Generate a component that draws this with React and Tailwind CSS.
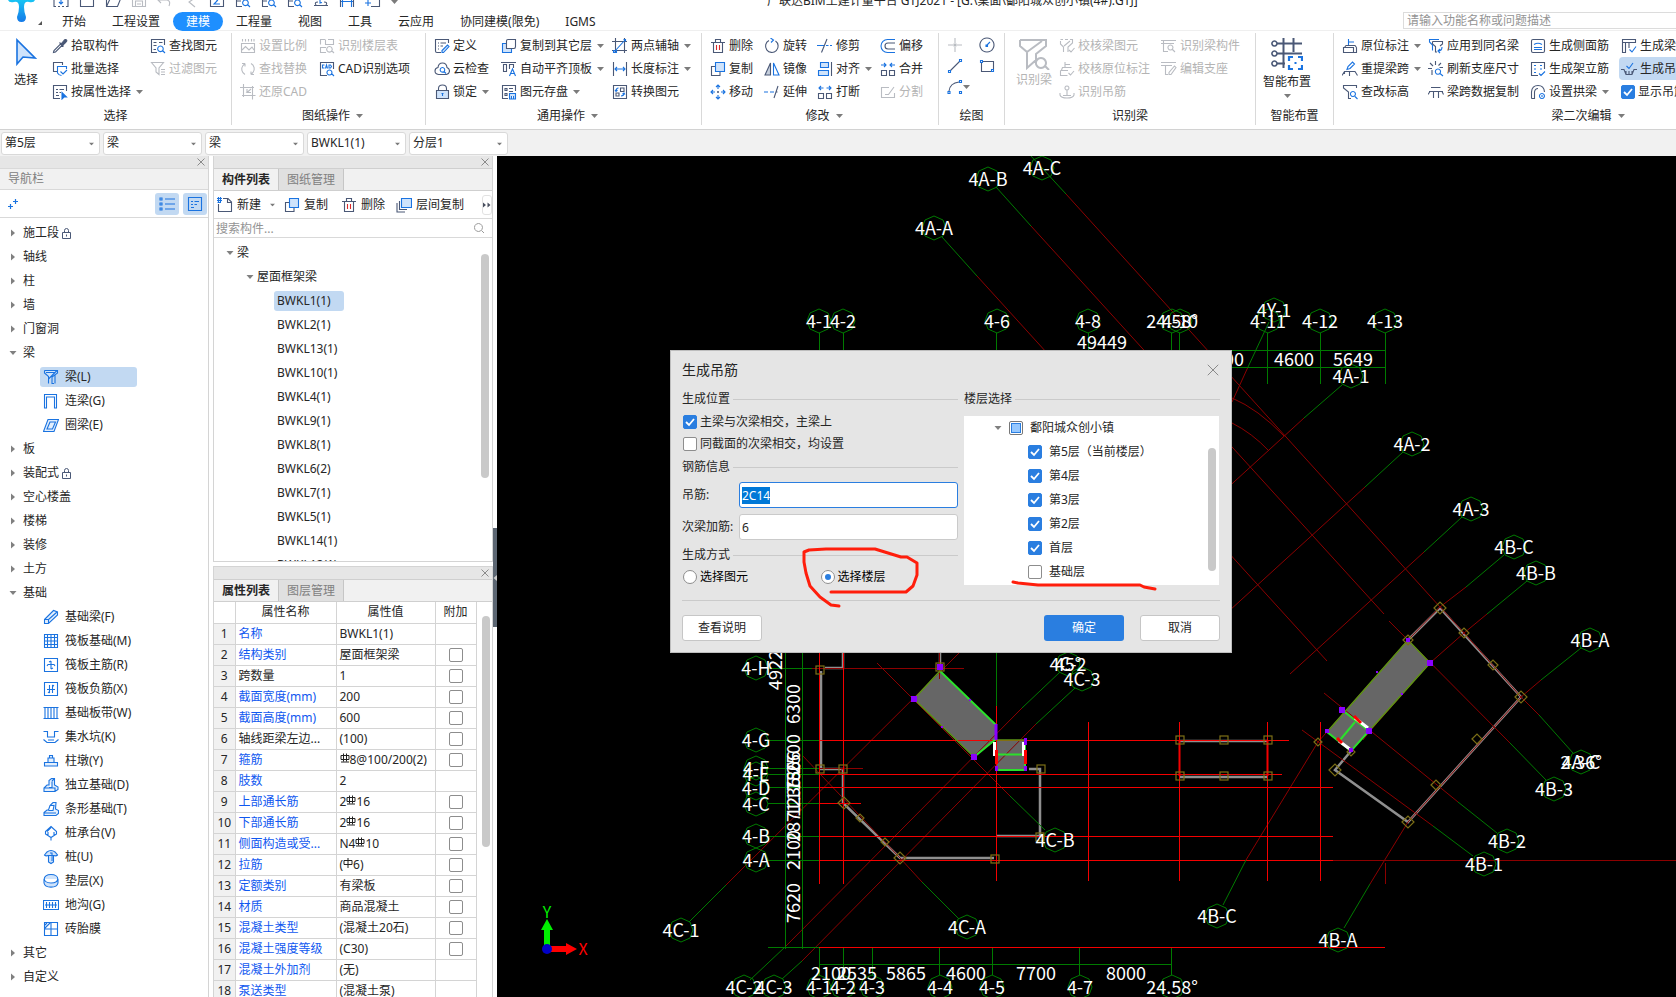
import { useEffect, useRef, useState } from 'react'

const STROKES = { n: '#4a5876', b: '#1a73e0', r: '#d92b2b', g: '#b9bcc2' }

// 16x16 line icons: [stroke key, path, filled?]
const ICONS = {
  picker: [['n', 'M1.5 14.5 2 12.5 8.5 6 10 7.500 3.5 14ZM7.500 4.500 11.500 8.500'], ['n', 'M9 6 12 2.500Q13.500 1 14.500 2T13.500 4.500L10.500 7.500Z', '#4a5876']],
  batch: [['n', 'M5 10.500H1.500V1.500H10.500V4'], ['b', 'M14.500 8V5.500H5.500V12Q7 14.500 9.500 14.500M8.500 10.500 11 13 15 9']],
  byProp: [['n', 'M8 14.500H1.500V1.500H14.500V7M4 5.500H6M7.500 5.500H12M4 8.500H6M7.500 8.500H9M4 11.500H7'], ['b', 'M10 8.500V15L12 13H14.500Z', '#1a73e0']],
  find: [['n', 'M7 14.500H1.500V1.500H14.500V7M3.500 4.500H6.500M3.500 7.500H6.500M3.500 11.500H6M9 4.500H12.500'], ['b', 'M10.500 8A2.800 2.800 0 1 1 10.400 8ZM12.500 12.500 15 15']],
  filter: [['n', 'M1.500 1.500H13.500L9 7V13.500L6 11V7ZM11 8.500H15M11 11H15M11 13.500H15']],
  scale: [['n', 'M1.500 5.500H14.500V14.500H1.500ZM2.500 1V3.500M5.500 1V3.500M8.500 1V3.500M11.500 1V3.500M14 1V3.500M2 12 5.500 8.500 9 12 12 9 14 12']],
  replace: [['n', 'M5 13.500A6 6 0 0 1 3 4.500L5 2.500M5 2.500H2M5 2.500V5.500M11 2.500A6 6 0 0 1 13 11.500L11 13.500M11 13.500H14M11 13.500V10.500']],
  restore: [['n', 'M0 3.500H14M3.500 0V13M2 11.500H15.500M12.500 2V15.500M11 5 7 8.500H11M7 8.500V5']],
  floorTable: [['n', 'M6 1.500H1.500V6.500M1.500 9V14.500H7M6.500 1.500V6.500H14.500V1.500H9M1.500 9.500H7M10.500 8.500A2.800 2.800 0 1 1 10.400 8.500ZM12.500 12.500 15 15']],
  cad: [['n', 'M8 14.500H1.500V1.500H14.500V8'], ['b', 'M5.500 4H3.500V7H5.500M6.500 7.500 7.500 4 8.500 7.500M10 4V7H11.500L12.500 5.500 11.500 4ZM10.500 9A2.500 2.500 0 1 1 10.400 9ZM12.500 12.500 15 15']],
  define: [['n', 'M7 14.500H3Q1.500 14.500 1.500 13V1.500H14.500V5M4 5H5M6.500 5H12M4 8H5M6.500 8H9M4 11H5'], ['b', 'M8 14.500V12.500L13.500 7 15 8.500 9.500 14.500Z', '#cfe3fb']],
  cloud: [['n', 'M4.500 13.500Q1 13 1 10T4 6.500Q4.500 2 8.500 2T13 6.500Q15.500 7.500 15.500 10T12.500 13.500Z'], ['b', 'M8.500 6.500A2.300 2.300 0 1 1 8.400 6.500ZM10 10.500 12 12.500']],
  lock: [['n', 'M2.500 6.500H14.500V14.500H2.500Z', '#cfe3fb'], ['n', 'M4.500 6V4.500Q4.500 1 8.500 1T12.500 4.500V6'], ['b', 'M8.500 9V12M7.500 9.500H9.500']],
  copyFloor: [['b', 'M5.500 5.500H1.500V14.500H10.500V10.500', '#cfe3fb'], ['n', 'M5.500 3Q5.500 1.500 7 1.500H14.500V8.500Q14.500 10.500 13 10.500H5.500Z', '#fff']],
  alignTop: [['n', 'M0 1.500H15M2.500 3.500H5.500V10.500H2.500ZM8.500 8V3.500H12.500V7'], ['b', 'M8.500 15 11.500 8 14.500 15M9.500 12.500H13.500']],
  store: [['n', 'M7 14.500H1.500V1.500H14.500V7M4 4.500H6V6.500H4ZM4 9.500H6V11.500H4ZM8 4.500H12M8 7.500H12'], ['b', 'M8.500 9.500H14.500V15H8.500ZM10.500 12V15H12.500V12', '#cfe3fb']],
  twoPoint: [['n', 'M0 3.500H15M3.500 0V15M0 12.500H15M12.500 0V15'], ['b', 'M2.500 13.500 13.500 1.500M1.500 12.500H4.500V14.500H1.500ZM11.500 1.500H13.500V3.500']],
  dim: [['n', 'M1.500 1V15M14.500 1V15'], ['b', 'M3 8H13M5 6 3 8 5 10M11 6 13 8 11 10']],
  convert: [['n', 'M1.500 1.500H14.500V14.500H1.500ZM8.500 4H12V7.500H8.500ZM4 9H7V12H4Z'], ['b', 'M6.500 4Q4 4 4 7M3 6 4 7.500 5.500 6M9 12Q12 12 12 9M10.500 10 12 9 13 10.500']],
  trash: [['n', 'M1 4.500H15M3.500 4.500V14.500H12.500V4.500M5.500 4V1.500H10.500V4'], ['r', 'M6.500 7V12M9.500 7V12']],
  copy: [['n', 'M5 5.500H1.500V14.500H10V11'], ['b', 'M5.500 1.500H14.500V10.500H5.500Z', '#cfe3fb']],
  move: [['b', 'M8 1V5M8 11V15M1 8H5M11 8H15M6 3 8 1 10 3M6 13 8 15 10 13M3 6 1 8 3 10M13 6 15 8 13 10'], ['n', 'M8 7V9M7 8H9']],
  rotate: [['n', 'M5 2.500A6.300 6.300 0 1 0 11.500 3'], ['b', 'M6.500 0 9.500 2 7 4.500']],
  mirror: [['n', 'M6.500 2V14H1Z', '#c7d0dd'], ['b', 'M9.500 2V14H15Z']],
  extend: [['b', 'M0 8H4M6 8H10'], ['n', 'M10 14 14 2M12 8H13.500']],
  trim: [['b', 'M0 7.500H7M9 7.500H11.500M13 7.500H15'], ['n', 'M4.500 14.500 10 1']],
  align: [['b', 'M3.500 1.500H11.500V6.500H3.500ZM1.500 9.500H11.500V14.500H1.500Z', '#cfe3fb'], ['n', 'M14.500 1V15']],
  breakIt: [['n', 'M1.500 9.500H6.500V14.500H1.500ZM9.500 9.500H14.500V14.500H9.500Z'], ['b', 'M6.500 4H2M4 2 2 4 4 6M9.500 4H14M12 2 14 4 12 6']],
  offset: [['b', 'M15 1.500H7.500A6 6 0 0 0 7.500 14.500H15'], ['n', 'M15 5H8A3 3 0 0 0 8 11H15']],
  merge: [['n', 'M1.500 9.500H6.500V14.500H1.500ZM9.500 9.500H14.500V14.500H9.500Z'], ['b', 'M1 4H6M4 2 6 4 4 6M15 4H10M12 2 10 4 12 6']],
  split: [['n', 'M9 3.500H1.500V13.500H14.500V9M5 10.500H8.500L14 3']],
  point: [['g', 'M8 1V6M8 10V15M1 8H6M10 8H15M7 7H9V9H7Z', '#b9bcc2']],
  circle: [['n', 'M8 1A7 7 0 1 1 7.900 1Z'], ['b', 'M7.500 8.500 11 5M7 8H8.500V9.500H7Z']],
  line: [['n', 'M3 13 13 3'], ['b', 'M1.500 12.500H3.500V14.500H1.500ZM12.500 1.500H14.500V3.500H12.500Z']],
  rect: [['n', 'M3 3.500H14.500V11M13 13.500H2.500V5'], ['b', 'M1.500 2.500H3.500V4.500H1.500ZM12.500 11.500H14.500V13.500H12.500Z']],
  arc: [['n', 'M2 12Q3 4 12 3'], ['b', 'M1 12.500H3V14.500H1ZM12.500 1.500H14.500V3.500H12.500ZM12.500 12.500H14.500V14.500H12.500Z']],
  checkBeam: [['n', 'M1.500 1.500H4M6 1.500H9M11 1.500H13.500V5L9 9V14M1.500 3V6L4.500 9V14M5 8 11 3M10 12 12 14 15.500 10']],
  checkMark: [['n', 'M6 6.500V1M6 3.500H11M2.500 9 3.500 6.500H12.500M1.500 9.500H9M1.500 9.500V14.500H8.500M9.500 12 11.500 14 15 10']],
  hang: [['n', 'M8 2A2 2 0 1 1 7.900 2ZM8 6V12M1 9V11Q2 14 8 14T15 11V9M4 11.500H12']],
  beamPart: [['n', 'M0 2.500H15M2.500 3V13.500H7M0 5.500H13M9.500 7A2.500 2.500 0 1 1 9.400 7ZM11.500 11.500 14 14']],
  editSeat: [['n', 'M0 1.500H15M0 4.500H11M4.500 5V13.500H7M8 13.500V11.500L13.500 5 15 6.500 10 13.500Z']],
  posMark: [['b', 'M6.500 7V1M6.500 4H12'], ['n', 'M2.500 9.500 4 7.500H13L14.500 9.500M1.500 9.500H11.500V14.500H1.500ZM14.500 9.500V14.500H12']],
  reSpan: [['b', 'M5 8.500 6 5.500 10.500 1 12.500 3 8 7.500Z'], ['n', 'M0 14.500 2.500 10.500H13L15.500 14.500M7.500 10.500V15M2.500 10.500V13']],
  elevation: [['n', 'M9 14.500H6.500V8L1.500 4V1.500H14.500V4'], ['b', 'M11 7.500A2.500 2.500 0 1 1 10.900 7.500ZM13 12.500 15.500 15']],
  applyName: [['b', 'M11 1.500H1.500V4L4.500 7V12.500'], ['n', 'M4.500 3.500H14.500V6L12 8M4.500 3.500V6L7.500 8.500V14H9'], ['b', 'M14 9Q14 13 10 13M12 11 10 13 12 15']],
  refresh: [['n', 'M7.500 0V4M0 7.500H4M2 2 5 5M13 2 10.500 4.500M11.500 6.500H15M4 9V14'], ['b', 'M10 8A2.600 2.600 0 1 1 9.900 8ZM12 12.500 15 15']],
  spanCopy: [['n', 'M3 3.500H12.500M1 7.500H15M0 10.500 2 7.500M15.500 10.500 14 7.500M5.500 7.500V14M10.500 7.500V14']],
  sideBar: [['n', 'M3 1.500H13Q14.500 1.500 14.500 3V13Q14.500 14.500 13 14.500H3Q1.500 14.500 1.500 13V3Q1.500 1.500 3 1.500Z'], ['b', 'M4 6.500Q8 4 12 6.500M4 9.500H12M4 11.500H12']],
  frameBar: [['n', 'M8 14.500H1.500V1.500H14.500V8'], ['b', 'M4 4.500H6M10 4.500H12M4 8H6M10 8H12M4 11.500H6M9 12.500 11 14.500 15 10.500']],
  arch: [['n', 'M1.500 14.500V8Q2 1.500 8 1.500T14.500 8M1.500 14.500H4.500V8Q5 4.500 8 4.500'], ['b', 'M12 9.500A2.500 2.500 0 1 1 11.900 9.500ZM12 11V13']],
  genBeam: [['n', 'M1.500 1.500H14.500V4.500H1.500ZM1.500 4.500V14.500H4.500V4.500M8 4.500V10'], ['b', 'M8.500 11.500 11 14 15 8.500']],
  genHang: [['n', 'M0 8.500H3L5 13.500H11L13 8.500H16M5 10V13M8 10V13M11 10V13'], ['b', 'M5.500 5 8 7.500 12 2']],
  newDoc: [['n', 'M6 1.500H11L14.500 5V14.500H1.500V7M10.500 2V5.500H14'], ['b', 'M0 1.500H5M0 3.500H5M0.500 5.500H4M1.500 0V5M3.500 0V5']],
  layerCopy: [['n', 'M3.500 4V12.500H11M1 6V15H9'], ['b', 'M5.500 1.500H15.500V10.500H5.500Z', '#cfe3fb']],
  beam: [['b', 'M1.500 1.500H14.500V4L9 8V14.500H11M1.500 1.500V4L5.500 7.500V14.500M5.500 10 14 1.500M3 3.500H12M12 6V14.500', '#cfe3fb']],
  linkBeam: [['b', 'M1.500 15V1.500H13.500V15H11.500V4H3.500V15Z']],
  ringBeam: [['b', 'M5 2.500H15.500L11 14.500H0.500ZM7 5H12.500L9.500 12H4Z', '#e3effd']],
  baseBeam: [['b', 'M1.500 10.500 10.500 1.500 14.500 3V6L5.500 14.500H1.500ZM5.500 14V10.500L14 3M2 10.500H5.500', '#e3effd']],
  raft: [['b', 'M1.500 1.500H14.500V14.500H1.500ZM4.500 1.500V14.500M8 1.500V14.500M11.500 1.500V14.500M1.500 4.500H14.500M1.500 8H14.500M1.500 11.500H14.500']],
  raftMain: [['b', 'M1.500 1.500H14.500V14.500H1.500ZM8 4V12M4 9 5 7.500H11L12 9M6 5 8 4M10 11 8 12']],
  raftNeg: [['b', 'M1.500 1.500H14.500V14.500H1.500ZM6.500 4V12M9.500 4V12M4 8.500H12M5 11 6.500 12M11 5 9.500 4']],
  strip: [['b', 'M0.500 2.500H15.500M0.500 13.500H15.500M5 3V13M11 3V13M8 3V13'], ['b', 'M2 3V13M14 3V13']],
  pit: [['b', 'M0.500 2.500H4.500V8H11.500V2.500H15.500M0.500 10.500 4 13.500H12L15.500 10.500M5 11H11']],
  pier: [['b', 'M1.500 9.500H14.500V13H1.500ZM5 9.500V5H11V9.500M6.500 5V2.500H9.500V5', '#e3effd']],
  isoBase: [['b', 'M1 14.500V11L4 8H6V3.500L8.500 1.500H11.500V8L15 10V12.500L12 14.500ZM6 10.500H9V4.500M1 11H12V14M9 4 11.500 1.500', '#e3effd']],
  stripBase: [['b', 'M1 14.500V11.500L4 9H5.500L7 4.500 10 1.500H13L12.500 8 15.500 9.500V12.500L13 14.500ZM5.500 9.500H10L11 4.500H7M1 12H13', '#e3effd']],
  cap: [['b', 'M8 1.500 13.500 6.500V9L8 12.500 2.500 9V6.500ZM4 6.500 8 2.500M8 12V15.500M5 10.500V7M11 10.500V7']],
  pile: [['b', 'M1.500 6 4 3Q8 0 12 3L14.500 6Q13 7.500 11 6.500H5Q3 7.500 1.500 6ZM5.500 7V13L8 14.500 10.500 13V7M7 4H9V12', '#cfe3fb']],
  cushion: [['b', 'M8 1.500C17 1.500 17 10 8 10S-1 1.500 8 1.500ZM1 6V10C2 15.500 14 15.500 15 10V6', '#cfe3fb']],
  trench: [['b', 'M0.500 3.500H15.500V12.500H0.500ZM3.500 5V11M6.500 5V11M9.500 5V11M12.500 5V11M2 8H14']],
  brick: [['b', 'M1.500 1.500H14.500V14.500H1.500ZM8 1.500V14.500M1.500 8H14.500M2 7 7 2M2 4 4 2']],
  list: [['b', 'M1 2H3V4H1ZM1 7H3V9H1ZM1 12H3V14H1ZM6 3H16M6 8H16M6 13H16']],
  card: [['b', 'M1.500 1.500H14.500V14.500H1.500ZM4 5.500H6M7.500 5.500H12M4 8.500H6M7.500 8.500H10M4 11.500H7']],
  qSelect: [['n', 'M1 3V14.500H3M5 14.500H7M9 14.500H11M13 14.500H15V3'], ['b', 'M8 7V12M6 10 8 12 10 10']],
  qNew: [['n', 'M1.500 2V14.500H14.500V2Z']],
  qOpen: [['n', 'M1.500 14.500 5 7H15.500L12.500 14.500H1.500V2H11V7']],
  qSave: [['g', 'M1.500 2H14.500V14.500H1.500ZM4.500 14V9H11.500V14M6 12H10']],
  qUndo: [['g', 'M1 8H10Q14 9 12 14M4 5 1 8 4 11']],
  qRedo: [['g', 'M12 6 6 10 12 15']],
  qSum: [['n', 'M1.500 2H14.500V14.500H1.500Z'], ['b', 'M11 5H5L8.500 8.500 5 12H11']],
  qView: [['n', 'M1.500 2V14.500H7M1.500 9H6M7 2V8'], ['b', 'M10.500 8A2.800 2.800 0 1 1 10.400 8ZM12.500 12.500 15 15']],
  qCloud: [['n', 'M1 13.500H15M3 13Q1 10 5 10M13 13Q15 10 11 10'], ['b', 'M7 5V11L9 10.500']],
  qBridge: [['b', 'M1 9.500H15M3.500 6V15M12.500 6V15'], ['n', 'M1.500 15V6M14.500 15V6']],
  qAdd: [['b', 'M0 11H6M3 8V14'], ['n', 'M6 14.500H14.500V3']],
}

const QUICK = ['qSelect', 'qNew', 'qOpen', 'qSave', 'qUndo', 'qRedo', 'qSum', 'qView', 'qView', 'qView', 'qCloud', 'qBridge', 'qAdd']
const TABS = ['开始', '工程设置', '建模', '工程量', '视图', '工具', '云应用', '协同建模(限免)', 'IGMS']

const SELECT_COLS = [
  { w: 'w-[98px]', items: [['picker', '拾取构件'], ['batch', '批量选择'], ['byProp', '按属性选择', 'menu']] },
  { w: 'w-[80px]', items: [['find', '查找图元'], ['filter', '过滤图元', 'off']] },
]
const DRAWING_COLS = [
  { w: 'w-[79px]', items: [['scale', '设置比例', 'off'], ['replace', '查找替换', 'off'], ['restore', '还原CAD', 'off']] },
  { w: 'w-[106px]', items: [['floorTable', '识别楼层表', 'off'], ['cad', 'CAD识别选项']] },
]
const COMMON_COLS = [
  { w: 'w-[67px]', items: [['define', '定义'], ['cloud', '云检查'], ['lock', '锁定', 'menu']] },
  { w: 'w-[111px]', items: [['copyFloor', '复制到其它层', 'menu'], ['alignTop', '自动平齐顶板', 'menu'], ['store', '图元存盘', 'menu']] },
  { w: 'w-[88px]', items: [['twoPoint', '两点辅轴', 'menu'], ['dim', '长度标注', 'menu'], ['convert', '转换图元']] },
]
const MODIFY_COLS = [
  { w: 'w-[54px]', items: [['trash', '删除'], ['copy', '复制'], ['move', '移动']] },
  { w: 'w-[53px]', items: [['rotate', '旋转'], ['mirror', '镜像'], ['extend', '延伸']] },
  { w: 'w-[63px]', items: [['trim', '修剪'], ['align', '对齐', 'menu'], ['breakIt', '打断']] },
  { w: 'w-[54px]', items: [['offset', '偏移'], ['merge', '合并'], ['split', '分割', 'off']] },
]
const DETECT_COLS = [
  { w: 'w-[102px]', items: [['checkBeam', '校核梁图元', 'off'], ['checkMark', '校核原位标注', 'off'], ['hang', '识别吊筋', 'off']] },
  { w: 'w-[90px]', items: [['beamPart', '识别梁构件', 'off'], ['editSeat', '编辑支座', 'off']] },
]
const EDIT_COLS = [
  { w: 'w-[86px]', items: [['posMark', '原位标注', 'menu'], ['reSpan', '重提梁跨', 'menu'], ['elevation', '查改标高']] },
  { w: 'w-[102px]', items: [['applyName', '应用到同名梁'], ['refresh', '刷新支座尺寸'], ['spanCopy', '梁跨数据复制']] },
  { w: 'w-[91px]', items: [['sideBar', '生成侧面筋'], ['frameBar', '生成架立筋'], ['arch', '设置拱梁', 'menu']] },
]

const NAV = [
  { t: '施工段', lock: true }, { t: '轴线' }, { t: '柱' }, { t: '墙' }, { t: '门窗洞' },
  { t: '梁', kids: [['beam', '梁(L)'], ['linkBeam', '连梁(G)'], ['ringBeam', '圈梁(E)']] },
  { t: '板' }, { t: '装配式', lock: true }, { t: '空心楼盖' }, { t: '楼梯' }, { t: '装修' }, { t: '土方' },
  {
    t: '基础',
    kids: [
      ['baseBeam', '基础梁(F)'], ['raft', '筏板基础(M)'], ['raftMain', '筏板主筋(R)'], ['raftNeg', '筏板负筋(X)'],
      ['strip', '基础板带(W)'], ['pit', '集水坑(K)'], ['pier', '柱墩(Y)'], ['isoBase', '独立基础(D)'],
      ['stripBase', '条形基础(T)'], ['cap', '桩承台(V)'], ['pile', '桩(U)'], ['cushion', '垫层(X)'],
      ['trench', '地沟(G)'], ['brick', '砖胎膜'],
    ],
  },
  { t: '其它' }, { t: '自定义' },
]

const BEAMS = ['BWKL1(1)', 'BWKL2(1)', 'BWKL13(1)', 'BWKL10(1)', 'BWKL4(1)', 'BWKL9(1)', 'BWKL8(1)', 'BWKL6(2)', 'BWKL7(1)', 'BWKL5(1)', 'BWKL14(1)', 'BWKL12(1)']

// # = three-grade rebar mark, % = plain bar mark
const PROPS = [
  ['名称', 'BWKL1(1)', 0, 1], ['结构类别', '屋面框架梁', 1, 1], ['跨数量', '1', 1, 0], ['截面宽度(mm)', '200', 1, 1],
  ['截面高度(mm)', '600', 1, 1], ['轴线距梁左边...', '(100)', 1, 0], ['箍筋', '#8@100/200(2)', 1, 1], ['肢数', '2', 0, 1],
  ['上部通长筋', '2#16', 1, 1], ['下部通长筋', '2#16', 1, 1], ['侧面构造或受...', 'N4#10', 1, 1], ['拉筋', '(%6)', 1, 1],
  ['定额类别', '有梁板', 1, 1], ['材质', '商品混凝土', 1, 1], ['混凝土类型', '(混凝土20石)', 1, 1], ['混凝土强度等级', '(C30)', 1, 1],
  ['混凝土外加剂', '(无)', 0, 1], ['泵送类型', '(混凝土泵)', 0, 1],
]

function Icon({ name, off = false, className = 'h-4 w-4' }) {
  return (
    <svg viewBox="0 0 16 16" className={`shrink-0 ${className}`} aria-hidden="true">
      {ICONS[name].map(([c, d, fill], i) => (
        <path key={i} d={d} stroke={off ? STROKES.g : STROKES[c]} fill={off ? 'none' : fill || 'none'} strokeWidth="1.1" />
      ))}
    </svg>
  )
}

function Caret({ className = '' }) {
  return (
    <svg viewBox="0 0 7 4" className={`h-1 w-[7px] shrink-0 ${className}`} aria-hidden="true">
      <path d="M0 0H7L3.500 4Z" fill="#7b7b7b" />
    </svg>
  )
}

function TreeArrow({ open }) {
  return (
    <svg viewBox="0 0 8 8" className="h-2 w-2 shrink-0" aria-hidden="true">
      <path d={open ? 'M0.500 2H7.500L4 6Z' : 'M2 0.500V7.500L6 4Z'} fill="#808080" />
    </svg>
  )
}

function Cross({ className = 'h-2 w-2' }) {
  return (
    <svg viewBox="0 0 8 8" className={className} aria-hidden="true">
      <path d="M0.500 0.500 7.500 7.500M7.500 0.500 0.500 7.500" stroke="#8a8a8a" strokeWidth="1" vectorEffect="non-scaling-stroke" />
    </svg>
  )
}

function Check({ id, label, defaultChecked }) {
  return (
    <span className="grid shrink-0">
      <input
        id={id}
        type="checkbox"
        aria-label={label}
        defaultChecked={defaultChecked}
        className="peer col-start-1 row-start-1 h-3.5 w-3.5 appearance-none rounded-[2px] border border-[#8d8d8d] bg-white checked:border-[#2a7ee0] checked:bg-[#2a7ee0]"
      />
      <svg viewBox="0 0 14 14" className="pointer-events-none col-start-1 row-start-1 hidden h-3.5 w-3.5 peer-checked:block" aria-hidden="true">
        <path d="M3 7 6 10 11 4" stroke="#fff" strokeWidth="1.800" fill="none" />
      </svg>
    </span>
  )
}

function Tool({ item }) {
  const [icon, label, flag] = item
  const off = flag === 'off'
  return (
    <button disabled={off} className={`flex h-[23px] items-center gap-[3px] whitespace-nowrap ${off ? 'text-[#b4b4b4]' : ''}`}>
      <Icon name={icon} off={off} />
      {label}
      {flag === 'menu' && <Caret className="ml-0.5" />}
    </button>
  )
}

function Columns({ cols }) {
  return cols.map((col, i) => (
    <div key={i} className={`shrink-0 ${col.w}`}>
      {col.items.map((item) => <Tool key={item[1]} item={item} />)}
    </div>
  ))
}

function Group({ label, menu, width, children }) {
  return (
    <>
      <section className={`flex shrink-0 flex-col ${width}`}>
        <div className="flex h-[72px] pt-[3px]">{children}</div>
        <div className="flex h-[27px] items-center justify-center gap-1.5 whitespace-nowrap">
          {label}
          {menu && <Caret />}
        </div>
      </section>
      <div className="mb-1 mt-0.5 w-px shrink-0 bg-[#d9d9d9]" />
    </>
  )
}

function Logo() {
  return (
    <svg viewBox="0 0 49 31" className="h-[31px] w-[49px] shrink-0" aria-hidden="true">
      <defs>
        <linearGradient id="drop" x1="0" y1="0" x2="0" y2="1">
          <stop offset="0" stopColor="#18c4f4" />
          <stop offset="1" stopColor="#1579e8" />
        </linearGradient>
      </defs>
      <path d="M8 0H35Q34 3 29 2Q24 1 24 7Q24 12 26 17Q26 22 21.500 22T17 17Q19 12 19 7Q19 1 14 2Q9 3 8 0Z" fill="url(#drop)" />
      <path d="M38 25H42V21Z" fill="#555" />
    </svg>
  )
}

function Header() {
  return (
    <header className="flex h-[31px] shrink-0 border-b border-[#efefef] bg-white">
      <Logo />
      <div className="min-w-0 flex-1">
        <div className="flex h-3 items-end overflow-hidden">
          <div className="flex h-6 shrink-0 items-end gap-2.5 pb-1 pl-1">
            {QUICK.map((n, i) => (
              <button key={i} aria-label={n} className="h-4 w-4"><Icon name={n} /></button>
            ))}
            <Caret className="mb-1" />
          </div>
          <h1 className="ml-[369px] h-[22px] whitespace-nowrap leading-[22px]">广联达BIM土建计量平台 GTJ2021 - [G:\桌面\鄱阳城众创小镇(4#).GTJ]</h1>
        </div>
        <div className="flex items-end justify-between">
          <nav className="flex">
            {TABS.map((t) => (
              <a key={t} href="#" className={`h-[19px] whitespace-nowrap rounded-full px-[13px] leading-[19px] ${t === '建模' ? 'bg-[#1e8fff] text-white' : ''}`}>
                {t}
              </a>
            ))}
          </nav>
          <input
            aria-label="搜索功能"
            placeholder="请输入功能名称或问题描述"
            className="mb-0.5 h-[17px] w-[273px] border border-r-0 border-[#dcdcdc] bg-white px-[3px] placeholder:text-[#949494]"
          />
        </div>
      </div>
    </header>
  )
}

function Ribbon() {
  return (
    <div className="flex h-[99px] shrink-0 overflow-hidden border-b border-[#d2d2d2] bg-white">
      <Group label="选择" width="w-[231px]">
        <button className="flex w-[52px] shrink-0 flex-col items-center gap-1.5 pt-1">
          <svg viewBox="0 0 22 28" className="h-7 w-[22px]" aria-hidden="true">
            <path d="M2 2V26L8 19 20 20Z" fill="#cfe3fb" stroke="#1a73e0" strokeWidth="1.600" />
          </svg>
          选择
        </button>
        <Columns cols={SELECT_COLS} />
      </Group>
      <Group label="图纸操作" menu width="w-[193px] pl-2"><Columns cols={DRAWING_COLS} /></Group>
      <Group label="通用操作" menu width="w-[275px] pl-2"><Columns cols={COMMON_COLS} /></Group>
      <Group label="修改" menu width="w-[236px] pl-2"><Columns cols={MODIFY_COLS} /></Group>
      <Group label="绘图" width="w-[65px]">
        <div className="grid grid-cols-2 items-center justify-items-center">
          <button aria-label="点" className="h-4 w-4"><Icon name="point" /></button>
          <button aria-label="圆" className="h-4 w-4"><Icon name="circle" /></button>
          <button aria-label="直线" className="h-4 w-4"><Icon name="line" /></button>
          <button aria-label="矩形" className="h-4 w-4"><Icon name="rect" /></button>
          <button aria-label="弧" className="h-4 w-4"><Icon name="arc" /></button>
          <Caret className="-ml-2 justify-self-start" />
          <span className="h-0 w-8" />
          <span className="h-0 w-8" />
        </div>
      </Group>
      <Group label="识别梁" width="w-[250px]">
        <button disabled className="flex w-[54px] shrink-0 flex-col items-center gap-0.5 pl-1 pt-1 text-[#b4b4b4]">
          <svg viewBox="0 0 32 32" className="h-8 w-8" aria-hidden="true">
            <path d="M2 2H28V8L18 16V24M2 2V8L9 14V30L18 22M9 14 24 3M23 20A5 5 0 1 1 22.900 20ZM27 28 31 32" fill="none" stroke="#b9bcc2" strokeWidth="2" />
          </svg>
          <span className="whitespace-nowrap">识别梁</span>
        </button>
        <Columns cols={DETECT_COLS} />
      </Group>
      <Group label="智能布置" width="w-[77px]">
        <button className="flex w-[62px] flex-col items-center gap-1 pt-1">
          <svg viewBox="0 0 32 32" className="h-8 w-8 shrink-0" aria-hidden="true">
            <path d="M6 5.500H31M6 15.500H31M6 25.500H14M12.500 0V30M22.500 0V14" fill="none" stroke="#4a5876" strokeWidth="2" />
            <path d="M3.500 3A2.500 2.500 0 1 1 3.400 3ZM3.500 13A2.500 2.500 0 1 1 3.400 13ZM3.500 23A2.500 2.500 0 1 1 3.400 23Z" fill="none" stroke="#4a5876" strokeWidth="1.600" />
            <path d="M18 23V19H22M27 19H31V23M31 27V31H27M22 31H18V27M23.500 25H25.500" fill="none" stroke="#1a73e0" strokeWidth="2.200" />
          </svg>
          <span className="whitespace-nowrap leading-4">智能布置</span>
          <Caret />
        </button>
      </Group>
      <Group label="梁二次编辑" menu width="w-[500px] pl-2">
        <Columns cols={EDIT_COLS} />
        <div className="w-24 shrink-0">
          <Tool item={['genBeam', '生成梁']} />
          <div className="-ml-0.5 rounded-l bg-[#c2d9f2] pl-0.5"><Tool item={['genHang', '生成吊']} /></div>
          <div className="flex h-[23px] items-center gap-[3px] whitespace-nowrap">
            <Check id="show-hang" defaultChecked />
            <label htmlFor="show-hang">显示吊筋</label>
          </div>
        </div>
      </Group>
    </div>
  )
}

function Combos() {
  return (
    <div className="flex h-[26px] shrink-0 items-center gap-[3px] bg-[#f1f1f1] pl-px">
      {[['楼层', '第5层'], ['构件类别', '梁'], ['构件类型', '梁'], ['构件', 'BWKL1(1)'], ['分层', '分层1']].map(([name, value]) => (
        <div key={name} className="relative">
          <select aria-label={name} className="h-[23px] w-[99px] appearance-none rounded-[3px] border border-[#d9d9d9] bg-white px-[3px]">
            <option>{value}</option>
          </select>
          <Caret className="pointer-events-none absolute right-[5px] top-[10px] scale-75" />
        </div>
      ))}
    </div>
  )
}

function Strip() {
  return (
    <div className="flex h-3 shrink-0 items-center justify-end bg-[#e6e6e6] pr-[3px]">
      <button aria-label="关闭"><Cross /></button>
    </div>
  )
}

function NavPanel() {
  const [selected, setSelected] = useState('梁(L)')
  return (
    <aside className="flex w-[209px] shrink-0 flex-col border-r border-[#d4d4d4] bg-white">
      <Strip />
      <h2 className="h-[22px] shrink-0 border-b border-t border-[#d9d9d9] bg-[#f1f1f1] pl-2 leading-5 text-[#808080]">导航栏</h2>
      <div className="flex h-7 shrink-0 items-center gap-1 border-b border-[#d9d9d9] pl-2 pr-px">
        <svg viewBox="0 0 10 10" className="mr-auto h-2.5 w-2.5" aria-hidden="true">
          <path d="M0 7.500H5M2.500 5V10M5 2.500H10M7.500 0V5" stroke="#1a73e0" fill="none" strokeWidth="1.200" />
        </svg>
        <button aria-label="列表" className="grid h-[22px] w-6 place-items-center rounded-[3px] bg-[#c2d9f2]"><Icon name="list" /></button>
        <button aria-label="卡片" className="grid h-[22px] w-6 place-items-center rounded-[3px] bg-[#c2d9f2]"><Icon name="card" /></button>
      </div>
      <ul className="min-h-0 flex-1 overflow-hidden pt-[3px]">
        {NAV.map((node) => (
          <li key={node.t}>
            <div className="flex h-6 items-center gap-1.5 pl-[9px]">
              <TreeArrow open={!!node.kids} />
              <span className="flex items-center gap-[3px]">
                {node.t}
                {node.lock && (
                  <svg viewBox="0 0 9 11" className="h-[11px] w-[9px]" aria-hidden="true">
                    <path d="M0.500 4.500H8.500V10.500H0.500ZM2.500 4V2.500Q2.500 0.500 4.500 0.500T6.500 2.500V4M4.500 6.500V8.500" fill="none" stroke="#4a5876" />
                  </svg>
                )}
              </span>
            </div>
            {node.kids?.map(([icon, label]) => (
              <div key={label} className="flex h-6 items-center pl-10">
                <button
                  onClick={() => setSelected(label)}
                  className={`flex h-5 w-[97px] items-center gap-1.5 whitespace-nowrap rounded-[3px] pl-[3px] ${selected === label ? 'bg-[#c2d9f2]' : ''}`}
                >
                  <Icon name={icon} />
                  {label}
                </button>
              </div>
            ))}
          </li>
        ))}
      </ul>
    </aside>
  )
}

function PanelTabs({ items }) {
  return (
    <div role="tablist" className="flex h-[23px] shrink-0 border-b border-t border-[#cfcfcf] bg-[#f1f1f1]">
      <button role="tab" className="w-[65px] border-r border-[#c6c6c6] font-bold">{items[0]}</button>
      <button role="tab" className="w-[65px] border-r border-[#c6c6c6] bg-[#e0e0e0] text-[#808080]">{items[1]}</button>
    </div>
  )
}

function ComponentPanel() {
  return (
    <section className="flex h-[406px] shrink-0 flex-col border border-t-0 border-[#d4d4d4] bg-white">
      <Strip />
      <PanelTabs items={['构件列表', '图纸管理']} />
      <div className="flex h-7 shrink-0 items-center whitespace-nowrap border-b border-[#d9d9d9] pl-[3px]">
        <button className="flex w-[67px] items-center gap-1"><Icon name="newDoc" />新建<Caret className="ml-1 scale-75" /></button>
        <button className="flex w-[57px] items-center gap-1"><Icon name="copy" />复制</button>
        <button className="flex w-[55px] items-center gap-1"><Icon name="trash" />删除</button>
        <button className="flex items-center gap-1"><Icon name="layerCopy" />层间复制</button>
        <button aria-label="更多" className="ml-auto grid h-5 w-2.5 place-items-center rounded-[3px] border border-[#e2e2e2]">
          <svg viewBox="0 0 8 6" className="h-1.5 w-2" aria-hidden="true"><path d="M0 0.500 3 3 0 5.500ZM4.500 0.500 7.500 3 4.500 5.500Z" fill="#4a5060" /></svg>
        </button>
      </div>
      <div className="flex h-[19px] shrink-0 items-center border-b border-[#d9d9d9] pl-0.5 pr-2">
        <input aria-label="搜索构件" placeholder="搜索构件..." className="h-[18px] min-w-0 flex-1 placeholder:text-[#949494]" />
        <svg viewBox="0 0 10 10" className="h-2.5 w-2.5" aria-hidden="true"><path d="M4.500 0.500A4 4 0 1 1 4.400 0.500ZM7.500 7.500 10 10" fill="none" stroke="#999" /></svg>
      </div>
      <div className="flex min-h-0 flex-1 overflow-hidden">
        <ul className="flex-1 pt-[3px]">
          <li className="flex h-6 items-center gap-[3px] pl-3"><TreeArrow open />梁</li>
          <li className="flex h-6 items-center gap-[3px] pl-8"><TreeArrow open />屋面框架梁</li>
          {BEAMS.map((b, i) => (
            <li key={b} className="flex h-6 items-center pl-[60px]">
              <span className={`h-5 w-[70px] whitespace-nowrap rounded-[3px] pl-[3px] leading-5 ${i === 0 ? 'bg-[#c2d9f2]' : ''}`}>{b}</span>
            </li>
          ))}
        </ul>
        <div className="mr-[3px] mt-4 h-[224px] w-2 rounded-full bg-[#c9c9c9]" />
      </div>
    </section>
  )
}

function Rebar({ text }) {
  return text.split(/([#%])/).map((part, i) => {
    if (part !== '#' && part !== '%') return part
    return (
      <svg key={i} viewBox="0 0 10 10" className="mb-1 inline-block h-2.5 w-2.5" aria-hidden="true">
        <path d={part === '#' ? 'M1 2.500H9V6.500H1ZM3.500 0.500V8.500M6.500 0.500V8.500M1 9H9' : 'M1 2.500H9V6.500H1ZM5 0V10'} fill="none" stroke="#222" />
      </svg>
    )
  })
}

function PropertyPanel() {
  return (
    <section className="mt-1 flex min-h-0 flex-1 flex-col overflow-hidden border border-b-0 border-[#d4d4d4] bg-white">
      <Strip />
      <PanelTabs items={['属性列表', '图层管理']} />
      <div className="flex">
        <table className="w-[262px] shrink-0 table-fixed border-collapse">
          <colgroup>
            <col className="w-[21px]" />
            <col className="w-[101px]" />
            <col className="w-[99px]" />
            <col className="w-[41px]" />
          </colgroup>
          <thead>
            <tr className="h-[21px]">
              {['', '属性名称', '属性值', '附加'].map((h) => (
                <th key={h} className="border-b border-r border-[#d4d4d4] p-0 font-normal">{h}</th>
              ))}
            </tr>
          </thead>
          <tbody>
            {PROPS.map(([name, value, extra, blue], i) => (
              <tr key={name} className="h-[21px]">
                <td className="border-b border-r border-[#d4d4d4] bg-[#f1f1f1] p-0 text-center">{i + 1}</td>
                <td className={`whitespace-nowrap border-b border-r border-[#d4d4d4] p-0 pl-[3px] ${blue ? 'text-[#1058f0]' : ''}`}>{name}</td>
                <td className="whitespace-nowrap border-b border-r border-[#d4d4d4] p-0 pl-[3px]"><Rebar text={value} /></td>
                <td className="border-b border-r border-[#d4d4d4] p-0">
                  {extra ? <span className="flex justify-center"><Check label={`附加 ${name}`} /></span> : null}
                </td>
              </tr>
            ))}
          </tbody>
        </table>
        <div className="ml-[5px] mt-3.5 h-[231px] w-2 rounded-full bg-[#c9c9c9]" />
      </div>
    </section>
  )
}

const BUBBLES = [
  [934, 228, '4A-A'], [988, 179, '4A-B'], [1042, 168, '4A-C'], [819, 321, '4-1'], [843, 321, '4-2'], [997, 321, '4-6'],
  [1088, 321, '4-8'], [1172, 321, '24.58°'], [1180, 321, '4-10'], [1274, 310, '4Y-1'], [1268, 321, '4-11'], [1320, 321, '4-12'],
  [1385, 321, '4-13'], [1351, 376, '4A-1'], [1412, 444, '4A-2'], [1471, 509, '4A-3'], [1514, 547, '4B-C'], [1536, 573, '4B-B'],
  [1590, 640, '4B-A'], [1581, 762, '4A-C'], [1554, 789, '4B-3'], [1507, 841, '4B-2'], [1484, 864, '4B-1'], [1217, 916, '4B-C'],
  [1338, 940, '4B-A'], [756, 668, '4-H'], [756, 740, '4-G'], [756, 768, '4-F'], [756, 774, '4-E'], [756, 788, '4-D'],
  [756, 804, '4-C'], [756, 836, '4-B'], [756, 860, '4-A'], [1068, 664, '4C-2'], [1082, 679, '4C-3'], [1055, 840, '4C-B'],
  [967, 927, '4C-A'], [681, 930, '4C-1'], [744, 987, '4C-2'], [774, 987, '4C-3'], [819, 987, '4-1'], [843, 987, '4-2'],
  [872, 987, '4-3'], [940, 987, '4-4'], [992, 987, '4-5'], [1080, 987, '4-7'], [1172, 987, '24.58°'],
]

const DIMS = [
  [1102, 342, '49449'], [1224, 359, '7700'], [1294, 359, '4600'], [1353, 359, '5649'], [1581, 762, '2.36°'], [1068, 664, '45°'],
  [831, 973, '2100'], [857, 973, '2535'], [906, 973, '5865'], [966, 973, '4600'], [1036, 973, '7700'], [1126, 973, '8000'],
]

const VERTICAL_DIMS = [[776, 665, '49224'], [794, 704, '6300'], [794, 754, '2500'], [794, 771, '1506'], [794, 781, '1785'], [794, 797, '1235'], [794, 822, '2871'], [794, 850, '2100'], [794, 903, '7620']]

const SQUARES = [
  [820, 670], [820, 769], [843, 769], [940, 667], [995, 859], [1041, 769], [1040, 837],
  [1180, 740], [1224, 740], [1268, 740], [1180, 776], [1224, 776], [1268, 776],
]
const DIAMONDS = [
  [844, 803, 6], [860, 818, 4], [885, 842, 4], [900, 858, 6], [1440, 608, 6], [1464, 633, 5], [1493, 665, 5], [1521, 697, 6],
  [1477, 739, 5], [1436, 785, 5], [1408, 822, 6], [1335, 770, 6], [1318, 742, 4], [1408, 640, 5], [1351, 752, 4],
]
const GRIPS = [[940, 667, 3], [914, 699, 3], [974, 757, 3], [970, 700, 1], [942, 727, 1], [1408, 640, 2], [1430, 663, 3], [1342, 710, 3], [1369, 731, 3], [1351, 750, 2], [1327, 731, 2], [1377, 672, 1], [1402, 694, 1]]

function Drawing() {
  return (
    <svg viewBox="497 156 1179 841" preserveAspectRatio="xMinYMin slice" className="h-full w-full" aria-label="绘图区">
      {/* slabs */}
      <path d="M940 671 996 725V739L974 757 914 699ZM997 740H1025V770H997ZM1408 640 1430 663 1351 751 1327 732Z" fill="#666" />
      {/* walls */}
      <path
        d="M843 652V668H825M821 671V769H843V803L900 858H994M996 836H1040V769H1029M940 652V668M1180 741H1268M1180 777H1268M1408 640 1440 608 1521 697 1408 822 1335 770 1351 751"
        fill="none" stroke="#8f8f8f" strokeWidth="2.500"
      />
      {/* faint grid axes */}
      <g fill="none" stroke="#8c0000" strokeWidth="1">
        <path d="M977 276 1327 661M1031 226 1384 614M1389 621 1510 743M1066 194 1440 607 1464 633 1521 697 1539 715" />
        <path d="M1466 587 1440 607 1408 640 1318 742 1246 860M1487 614 1464 633 1430 663 1369 732 1363 740M1541 680 1521 697 1408 822 1370 884" />
        <path d="M1433 826 1302 730M1458 802 1324 693M1304 418 1200 513M1365 487 1184 652M1424 552 1290 674M1248 367 1232 402" />
        <path d="M1232 398Q1258 409 1284 436M1232 423Q1252 433 1269 451" />
        <path d="M726 885 959 653M785 947 1022 708M802 961 1036 724M802 755 900 858 922 882M877 663 1010 796" />
        <path d="M812 668.500H964M819 768.500H863M1333 860.500H1676M939.500 652V679M1385.500 863V884" />
      </g>
      {/* main grid axes */}
      <g fill="none" stroke="#f40000" strokeWidth="1">
        <path d="M819 740.500H1289M819 774.500H1282M819 787.500H1333M819 803.500H861M819 836.500H1333M819 860.500H1333M819 947.500H1385" />
        <path d="M819.500 652V884M843.500 652V884M996.500 706V881M1088.500 722V881M1179.500 722V881M1267.500 722V881M1320.500 722V881" />
        <path d="M1179.500 741V776M1267.500 741V776" strokeWidth="2" />
      </g>
      <g fill="none" stroke="#007a00" strokeWidth="1">
        <path d="M942 237 977 276M996 187 1031 226M1031 156 1066 194M1504 555 1466 587M1527 581 1487 614M1581 648 1541 680M1573 753 1539 715" />
        <path d="M1546 780 1510 743M1497 833 1458 802M1473 856 1433 826M1223 905 1246 860M1344 928 1370 884M1342 385 1304 418M1403 452 1365 487M1462 517 1424 552M1269 322 1248 367" />
        <path d="M689 922 726 885M750 980 785 947M782 979 802 961M1022 708 1060 672M1036 724 1075 688M922 882 959 919M1010 796 1045 830" />
        <path d="M819 350.500H1385M1231 367.500H1385M819.500 333V352M843.500 333V352M996.500 333V352M1088.500 333V352M1171.500 333V352M1179.500 333V352M1267.500 333V384M1320.500 333V384M1385.500 333V384" />
        <path d="M785.500 652V949M802.500 652V949M996.500 652V706M768 668.500H812M768 740.500H819M768 768.500H819M768 774.500H819M768 787.500H819M768 803.500H819M768 836.500H819M768 860.500H819M768 947.500H819" />
        <path d="M819 964.500H1172M819.500 948V975M843.500 948V975M872.500 948V975M939.500 948V975M992.500 948V975M1079.500 948V975M1171.500 948V975" />
        {BUBBLES.map(([x, y], i) => (
          <path key={i} d={`M${x - 12} ${y}L${x - 9} ${y - 8}L${x} ${y - 12}L${x + 9} ${y - 8}L${x + 12} ${y}L${x + 9} ${y + 8}L${x} ${y + 12}L${x - 9} ${y + 8}Z`} />
        ))}
      </g>
      {/* beams on the slabs */}
      <g fill="none" strokeWidth="2">
        <path d="M940 671 996 725M974 757 996 739M1025 740V770H997M997 754.500H1025M1327 732 1351 751 1369 731 1342 710M1355 722 1340 740" stroke="#2be02b" />
        <path d="M940 671 914 699 974 757M997 740H1025M1327 732 1408 640 1430 663 1369 731" stroke="#5c9416" strokeWidth="1.500" />
        <path d="M994.500 742V756M1023.500 742V756M1355 718 1368 728M1339 741 1351 750" stroke="#fff" strokeWidth="3" />
        <path d="M996.500 750V764M1025.500 750V764M1354 716 1361 723M1337 738 1342 743" stroke="#f00" strokeWidth="3" />
        <path d="M996 724V740M1025.500 738V745M996.500 766V771M1025.500 766V771" stroke="#8a00ff" strokeWidth="3" />
      </g>
      <g fill="none" stroke="#7c6f16" strokeWidth="1.200">
        {SQUARES.map(([x, y], i) => <rect key={i} x={x - 4} y={y - 4} width="8" height="8" />)}
        {DIAMONDS.map(([x, y, r], i) => <path key={i} d={`M${x - r} ${y}L${x} ${y - r}L${x + r} ${y}L${x} ${y + r}Z`} />)}
      </g>
      {GRIPS.map(([x, y, r], i) => <rect key={i} x={x - r} y={y - r} width={r * 2} height={r * 2} fill="#8a00ff" />)}
      {/* labels */}
      <g className="fill-white text-[18px] [font-family:'Noto_Sans_CJK_SC',sans-serif]" textAnchor="middle">
        {[...BUBBLES, ...DIMS].map(([x, y, t], i) => <text key={i} x={x} y={y + 7}>{t}</text>)}
        {VERTICAL_DIMS.map(([x, y, t]) => <text key={t + y} transform={`translate(${x + 6} ${y}) rotate(-90)`}>{t}</text>)}
      </g>
      {/* axis widget */}
      <path d="M544 949V930H541L547 919 553 930H550V949Z" fill="#00ee00" />
      <path d="M547 946H566V943L577 949 566 955V952H547Z" fill="#f00" />
      <circle cx="547" cy="949" r="5" fill="#0000c8" />
      <g className="text-[16px] [font-family:'Noto_Sans_CJK_SC',sans-serif]" textAnchor="middle">
        <text x="547" y="918" fill="#00ee00">Y</text>
        <text x="583" y="955" fill="#f00">X</text>
      </g>
    </svg>
  )
}

function Legend({ children }) {
  return (
    <h3 className="flex h-6 items-center gap-[3px] whitespace-nowrap">
      {children}
      <span className="h-px flex-1 bg-[#cacaca]" />
    </h3>
  )
}

function HangerDialog() {
  const first = useRef(null)

  useEffect(() => {
    first.current?.focus()
    first.current?.select()
  }, [])

  return (
    <div role="dialog" aria-label="生成吊筋" className="absolute left-[173px] top-[194px] w-[562px] border border-[#bdbdbd] bg-[#e5e5e5] px-[11px] pb-[11px]">
      <div className="flex h-9 items-center justify-between pr-px pt-0.5">
        <h2 className="text-sm">生成吊筋</h2>
        <button aria-label="关闭"><Cross className="h-3 w-3" /></button>
      </div>
      <div className="flex gap-1.5">
        <div className="w-[276px]">
          <Legend>生成位置</Legend>
          <div className="flex h-[22px] items-center gap-[3px] pl-px"><Check id="main" defaultChecked /><label htmlFor="main">主梁与次梁相交，主梁上</label></div>
          <div className="flex h-[22px] items-center gap-[3px] pl-px"><Check id="same" /><label htmlFor="same">同截面的次梁相交，均设置</label></div>
          <Legend>钢筋信息</Legend>
          <div className="flex h-8 items-center">
            <label htmlFor="hanger" className="w-[57px]">吊筋:</label>
            <input id="hanger" ref={first} defaultValue="2C14" className="h-[26px] min-w-0 flex-1 rounded-[3px] border border-[#2a7ee0] bg-white px-0.5 outline-none selection:bg-[#0078d7] selection:text-white" />
          </div>
          <div className="flex h-8 items-center">
            <label htmlFor="extra" className="w-[57px]">次梁加筋:</label>
            <input id="extra" defaultValue="6" className="h-[26px] min-w-0 flex-1 rounded-[3px] border border-[#cacaca] bg-white px-0.5" />
          </div>
          <Legend>生成方式</Legend>
          <div className="flex h-5 items-center pl-px text-black">
            {[['pick', '选择图元'], ['floor', '选择楼层']].map(([id, text]) => (
              <div key={id} className="flex w-[141px] items-center gap-[3px]">
                <input
                  id={id} type="radio" name="mode" defaultChecked={id === 'floor'}
                  className="h-3.5 w-3.5 appearance-none rounded-full border border-[#8d8d8d] bg-white checked:border-4 checked:border-white checked:bg-[#2a7ee0] checked:outline checked:-outline-offset-1 checked:outline-[#8d8d8d]"
                />
                <label htmlFor={id}>{text}</label>
              </div>
            ))}
          </div>
        </div>
        <div className="min-w-0 flex-1">
          <Legend>楼层选择</Legend>
          <div className="mr-px mt-[5px] flex h-[169px] justify-between bg-white pr-[3px]">
            <ul>
              <li className="flex h-6 items-center gap-[7px] pl-[30px]">
                <TreeArrow open />
                <span className="grid">
                  <input id="all" type="checkbox" className="col-start-1 row-start-1 h-3.5 w-3.5 appearance-none rounded-[2px] border border-[#777] bg-white" />
                  <span className="pointer-events-none col-start-1 row-start-1 m-[2px] border border-[#2a7ee0] bg-[#96c8ff]" />
                </span>
                <label htmlFor="all">鄱阳城众创小镇</label>
              </li>
              {['第5层（当前楼层）', '第4层', '第3层', '第2层', '首层', '基础层'].map((f, i) => (
                <li key={f} className="flex h-6 items-center gap-[7px] pl-16">
                  <Check id={`floor-${i}`} defaultChecked={i < 5} />
                  <label htmlFor={`floor-${i}`}>{f}</label>
                </li>
              ))}
            </ul>
            <div className="mt-8 h-[123px] w-2 rounded-full bg-[#c9c9c9]" />
          </div>
        </div>
      </div>
      <div className="mb-3.5 mt-[13px] h-px bg-[#cacaca]" />
      <div className="flex">
        <button className="h-[26px] w-20 rounded-[3px] border border-[#c6c6c6] bg-white">查看说明</button>
        <button className="ml-auto h-[26px] w-20 rounded-[3px] bg-[#2a7ee0] text-white">确定</button>
        <button className="ml-4 h-[26px] w-20 rounded-[3px] border border-[#c6c6c6] bg-white">取消</button>
      </div>
      {/* hand-drawn marks */}
      <svg viewBox="0 0 562 302" className="pointer-events-none absolute -left-px -top-px h-[302px] w-[562px]" aria-hidden="true">
        <g fill="none" stroke="#ff1e0c" strokeWidth="3" strokeLinecap="round" strokeLinejoin="round">
          <path d="M169 256 161 255 150 247 140 236 136 223 134 212V202L139 200 156 199H205L231 207H237L247 213V225L243 236 236 242H161" />
          <path d="M343 232 348 233 368 235H470L474 237 485 239" />
        </g>
      </svg>
    </div>
  )
}

export default function App() {
  return (
    <div className="flex h-screen flex-col overflow-hidden bg-white text-xs text-[#262626] [font-family:'Noto_Sans','Noto_Sans_CJK_SC',sans-serif]">
      <Header />
      <Ribbon />
      <Combos />
      <main className="flex min-h-0 flex-1">
        <NavPanel />
        <div className="ml-1 flex w-[280px] shrink-0 flex-col">
          <ComponentPanel />
          <PropertyPanel />
        </div>
        <div className="w-1 shrink-0 bg-white pt-[372px]">
          <button aria-label="收起面板" className="grid h-[99px] w-1 place-items-center bg-[#5c6672]">
            <svg viewBox="0 0 4 6" className="h-1.5 w-1" aria-hidden="true"><path d="M4 0V6L0.500 3Z" fill="#ccc" /></svg>
          </button>
        </div>
        <div className="relative min-w-0 flex-1 overflow-hidden bg-black">
          <Drawing />
          <HangerDialog />
        </div>
      </main>
    </div>
  )
}
